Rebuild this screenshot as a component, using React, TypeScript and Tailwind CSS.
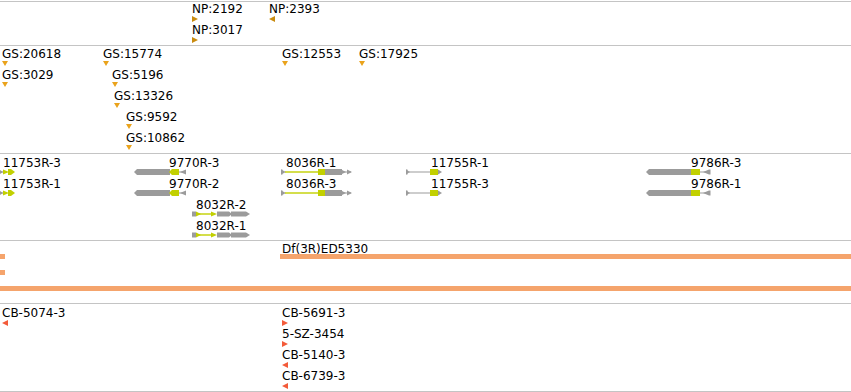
import React from "react";

// track colours
const GRAY = "#9b9b9b";
const GREEN = "#c2d000";
const NP_COLOR = "#c98b10";
const GS_COLOR = "#eaa31c";
const CB_COLOR = "#f35b3a";
const DEF_COLOR = "#f5a46c";

type Dir = "r" | "l" | "d";

type Marker = { x: number; row: number; label: string; dir: Dir };

const npMarkers: Marker[] = [
  { x: 192, row: 0, label: "NP:2192", dir: "r" },
  { x: 192, row: 1, label: "NP:3017", dir: "r" },
  { x: 269, row: 0, label: "NP:2393", dir: "l" },
];

const gsMarkers: Marker[] = [
  { x: 2, row: 0, label: "GS:20618", dir: "d" },
  { x: 2, row: 1, label: "GS:3029", dir: "d" },
  { x: 103, row: 0, label: "GS:15774", dir: "d" },
  { x: 112, row: 1, label: "GS:5196", dir: "d" },
  { x: 114, row: 2, label: "GS:13326", dir: "d" },
  { x: 126, row: 3, label: "GS:9592", dir: "d" },
  { x: 126, row: 4, label: "GS:10862", dir: "d" },
  { x: 282, row: 0, label: "GS:12553", dir: "d" },
  { x: 359, row: 0, label: "GS:17925", dir: "d" },
];

const cbMarkers: Marker[] = [
  { x: 2, row: 0, label: "CB-5074-3", dir: "l" },
  { x: 282, row: 0, label: "CB-5691-3", dir: "r" },
  { x: 282, row: 1, label: "5-SZ-3454", dir: "r" },
  { x: 282, row: 2, label: "CB-5140-3", dir: "l" },
  { x: 282, row: 3, label: "CB-6739-3", dir: "l" },
];

function Triangle({ dir, color }: { dir: Dir; color: string }) {
  if (dir === "d") {
    return (
      <svg width="7" height="5" className="block">
        <polygon points="0,0 6,0 3,5" fill={color} />
      </svg>
    );
  }
  return (
    <svg width="6" height="6" className="block">
      <polygon points={dir === "r" ? "0,0 6,3 0,6" : "6,0 0,3 6,6"} fill={color} />
    </svg>
  );
}

function MarkerStack({ items, color, offset }: { items: Marker[]; color: string; offset: number }) {
  return (
    <>
      {items.map((m) => (
        <div
          key={m.label}
          className="absolute flex flex-col"
          style={{ left: m.x, top: offset + m.row * 21 }}
        >
          <span className="text-[12px] leading-[14px] text-black whitespace-nowrap">{m.label}</span>
          <Triangle dir={m.dir} color={color} />
        </div>
      ))}
    </>
  );
}

function Gene11753() {
  return (
    <svg width="16" height="7">
      <rect x="0" y="2.5" width="4" height="1" fill={GRAY} />
      <polygon points="0,1 3,3 0,5" fill={GRAY} />
      <polygon points="3,0.5 9,3 3,5.5" fill={GREEN} />
      <polygon points="8,0 11,0 15,3 11,6 8,6" fill={GREEN} />
    </svg>
  );
}

function Gene9770() {
  return (
    <svg width="53" height="7">
      <polygon points="0,3 3,0 36,0 36,6 3,6" fill={GRAY} />
      <polygon points="35,3 38,0 45,0 45,6 38,6" fill={GREEN} />
      <rect x="45" y="2.5" width="7" height="1" fill={GRAY} />
      <polygon points="46,3 52,0.5 52,5.5" fill={GRAY} />
    </svg>
  );
}

function Gene8036() {
  return (
    <svg width="72" height="7">
      <polygon points="0,0.5 5,3 0,5.5" fill={GRAY} />
      <rect x="0" y="0.5" width="1.5" height="5" fill={GRAY} />
      <rect x="4" y="2.3" width="33" height="1.4" fill={GREEN} />
      <rect x="37" y="0" width="7" height="6" fill={GREEN} />
      <rect x="44" y="0" width="17" height="6" fill={GRAY} />
      <rect x="60" y="2.5" width="10" height="1" fill={GRAY} />
      <polygon points="60,0.5 65,3 60,5.5" fill={GRAY} />
      <polygon points="66,0.5 71,3 66,5.5" fill={GRAY} />
    </svg>
  );
}

function Gene11755() {
  return (
    <svg width="37" height="7">
      <rect x="0" y="0.5" width="1.5" height="5" fill={GRAY} />
      <polygon points="0,0.5 4,3 0,5.5" fill={GRAY} />
      <rect x="3" y="2.5" width="21" height="1" fill={GRAY} />
      <rect x="24" y="0" width="8" height="6" fill={GREEN} />
      <polygon points="32,0.5 36,3 32,5.5" fill={GRAY} />
    </svg>
  );
}

function Gene9786() {
  return (
    <svg width="65" height="7">
      <polygon points="0,3 3,0 45,0 45,6 3,6" fill={GRAY} />
      <rect x="45" y="0" width="9" height="6" fill={GREEN} />
      <rect x="54" y="2.5" width="9" height="1" fill={GRAY} />
      <polygon points="57,3 63,0.5 63,5.5" fill={GRAY} />
      <rect x="63" y="0.5" width="1.5" height="5" fill={GRAY} />
    </svg>
  );
}

function Gene8032() {
  return (
    <svg width="60" height="7">
      <rect x="0" y="0.5" width="4" height="5" fill={GRAY} />
      <rect x="4" y="2.3" width="16" height="1.4" fill={GREEN} />
      <polygon points="4,0.5 9,3 4,5.5" fill={GREEN} />
      <polygon points="19,0.5 25,3 19,5.5" fill={GREEN} />
      <polygon points="25,0.5 37,0.5 40,3 37,5.5 25,5.5" fill={GRAY} />
      <polygon points="39,0.5 54,0.5 58,3 54,5.5 39,5.5" fill={GRAY} />
    </svg>
  );
}

type Gene = { label: string; lx: number; gx: number; rows: number[]; glyph: () => React.ReactElement };

const genes: Gene[] = [
  { label: "11753R", lx: 3, gx: 0, rows: [3, 1], glyph: Gene11753 },
  { label: "9770R", lx: 169, gx: 134, rows: [3, 2], glyph: Gene9770 },
  { label: "8036R", lx: 286, gx: 281, rows: [1, 3], glyph: Gene8036 },
  { label: "11755R", lx: 431, gx: 406, rows: [1, 3], glyph: Gene11755 },
  { label: "9786R", lx: 691, gx: 646, rows: [3, 1], glyph: Gene9786 },
];

const lowerGene = { label: "8032R", lx: 196, gx: 192, rows: [2, 1], glyph: Gene8032 };

function GeneTrack() {
  const all = [
    ...genes.flatMap((g) => g.rows.map((n, i) => ({ g, name: `${g.label}-${n}`, row: i }))),
    ...lowerGene.rows.map((n, i) => ({ g: lowerGene, name: `${lowerGene.label}-${n}`, row: i + 2 })),
  ];
  return (
    <>
      {all.map(({ g, name, row }) => {
        const Glyph = g.glyph;
        return (
          <React.Fragment key={name}>
            <span
              className="absolute text-[12px] leading-[14px] text-black whitespace-nowrap"
              style={{ left: g.lx, top: 2 + row * 21 }}
            >
              {name}
            </span>
            <div className="absolute" style={{ left: g.gx, top: 15 + row * 21 }}>
              <Glyph />
            </div>
          </React.Fragment>
        );
      })}
    </>
  );
}

export default function App() {
  return (
    <div className="w-[851px] h-[392px] bg-white pt-px overflow-hidden font-['DejaVu_Sans',sans-serif]">
      {/* NP */}
      <div className="relative h-[44px] border-t border-[#c4c4c4]">
        <MarkerStack items={npMarkers} color={NP_COLOR} offset={0} />
      </div>

      {/* GS */}
      <div className="relative h-[108px] border-t border-[#c4c4c4]">
        <MarkerStack items={gsMarkers} color={GS_COLOR} offset={1} />
      </div>

      {/* genes */}
      <div className="relative h-[87px] border-t border-[#c4c4c4]">
        <GeneTrack />
      </div>

      {/* deficiencies */}
      <div className="relative h-[63px] border-t border-[#c4c4c4]">
        <span className="absolute left-[282px] top-[1px] text-[12px] leading-[14px] text-black whitespace-nowrap">
          Df(3R)ED5330
        </span>
        <div className="absolute left-[280px] right-0 top-[13px] h-[5px] bg-[#f5a46c]" />
        <div className="absolute left-0 top-[13px] w-[5px] h-[5px] bg-[#f5a46c]" />
        <div className="absolute left-0 top-[29px] w-[5px] h-[5px] bg-[#f5a46c]" />
        <div className="absolute left-0 right-0 top-[45px] h-[5px]" style={{ background: DEF_COLOR }} />
      </div>

      {/* CB */}
      <div className="relative h-[89px] border-t border-b border-[#c4c4c4]">
        <MarkerStack items={cbMarkers} color={CB_COLOR} offset={2} />
      </div>
    </div>
  );
}
